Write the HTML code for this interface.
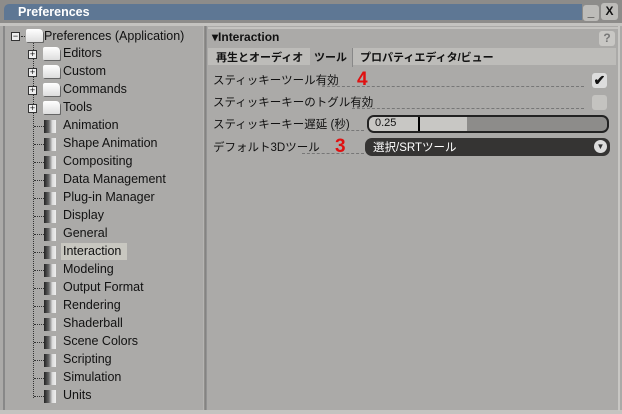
<!DOCTYPE html><html><head><meta charset="utf-8"><style>
*{margin:0;padding:0;box-sizing:border-box}
body{width:622px;height:414px;background:#abaaa8;position:relative;overflow:hidden;font-family:"Liberation Sans","Noto Sans CJK JP",sans-serif;font-size:12px;color:#111}
.a{position:absolute}
.tl{position:absolute;font-size:12.5px;white-space:nowrap}
.ic{position:absolute;width:12px;height:13px;background:linear-gradient(90deg,#222 0%,#666 40%,#ddd 70%,#eee 100%)}
.fd{position:absolute;width:17px;height:13px;background:linear-gradient(#fff,#ddd);border-radius:2px 4px 1px 1px;box-shadow:1px 1px 0 #666}
.pl{position:absolute;width:9px;height:9px;border:1px solid #333;background:#eee;font-size:9px;line-height:7px;text-align:center}
.dot{position:absolute;border-top:1px dotted #333;width:14px}
.jp{position:absolute;font-size:11.5px;white-space:nowrap}
.dl{position:absolute;border-top:1px dashed #777;height:0}
.tb{position:absolute;font-weight:bold;font-size:11px;white-space:nowrap;top:49px}
</style></head><body>
<div class="a" style="left:0;top:0;width:622px;height:23px;background:#8d8c8a"></div>
<div class="a" style="left:4px;top:4px;width:578px;height:16px;background:#5e7794;border-radius:5px 0 0 0"></div>
<div class="a" style="left:18px;top:4px;color:#fff;font-weight:bold;font-size:12.5px;line-height:16px">Preferences</div>
<div class="a" style="left:583px;top:5px;width:16px;height:16px;background:#bdbcb9;border-radius:3px;font-weight:bold;text-align:center;line-height:14px">_</div>
<div class="a" style="left:601px;top:3px;width:17px;height:17px;background:#bdbcb9;border-radius:3px;font-weight:bold;text-align:center;line-height:17px">X</div>
<div class="a" style="left:0;top:23px;width:622px;height:3px;background:#c4c3c0"></div>
<div class="a" style="left:3px;top:26px;width:2px;height:385px;background:#888"></div>
<div class="a" style="left:203px;top:26px;width:4px;height:385px;background:linear-gradient(90deg,#c8c7c4,#7d7c7a,#999)"></div>
<div class="a" style="left:0;top:410px;width:622px;height:4px;background:#c4c3c0"></div>
<div class="a" style="left:618px;top:26px;width:2px;height:385px;background:#c8c7c4"></div>

<!-- tree -->
<div class="pl" style="left:11px;top:32px">−</div>
<div class="dot" style="left:21px;top:36px;width:6px"></div>
<div class="fd" style="left:26px;top:29px"></div>
<div class="tl" style="left:44px;top:29px">Preferences (Application)</div>
<div class="a" style="left:33px;top:43px;height:355px;border-left:1px dotted #333"></div>
<div id="t"></div>
<script>
var items=["Editors","Custom","Commands","Tools","Animation","Shape Animation","Compositing","Data Management","Plug-in Manager","Display","General","Interaction","Modeling","Output Format","Rendering","Shaderball","Scene Colors","Scripting","Simulation","Units"];
var h="";
items.forEach(function(n,i){var y=54+i*18;
if(i<4){h+='<div class="pl" style="left:28px;top:'+(y-4)+'px">+</div><div class="fd" style="left:43px;top:'+(y-7)+'px"></div>';}
else{h+='<div class="dot" style="left:34px;top:'+y+'px;width:10px"></div><div class="ic" style="left:44px;top:'+(y-6)+'px"></div>';}
if(n=="Interaction")h+='<div class="a" style="left:61px;top:'+(y-9)+'px;width:66px;height:17px;background:#c8c7c0"></div>';
h+='<div class="tl" style="left:63px;top:'+(y-8)+'px">'+n+'</div>';});
document.getElementById("t").outerHTML=h;
</script>

<!-- right -->
<div class="a" style="left:208px;top:27px;width:410px;height:2px;background:#c4c3c0"></div>
<div class="a" style="left:212px;top:30px;font-weight:bold;font-size:12px">▾Interaction</div>
<div class="a" style="left:599px;top:31px;width:16px;height:15px;background:#c8c7c4;border-radius:3px;text-align:center;font-weight:bold;color:#777;line-height:15px">?</div>
<div class="a" style="left:208px;top:48px;width:408px;height:17px;background:#bdbcb9"></div>
<div class="a" style="left:310px;top:48px;width:43px;height:19px;background:#abaaa8;border-right:1px solid #888"></div>
<div class="tb" style="left:216px">再生とオーディオ</div>
<div class="tb" style="left:314px">ツール</div>
<div class="tb" style="left:360px">プロパティエディタ/ビュー</div>

<div class="jp" style="left:213px;top:72px">スティッキーツール有効</div>
<div class="dl" style="left:322px;top:86px;width:262px"></div>
<div class="a" style="left:357px;top:69px;color:#e01010;font-weight:bold;font-size:19px">4</div>
<div class="a" style="left:592px;top:73px;width:15px;height:15px;background:#ddd;border-radius:3px;font-size:14px;line-height:15px;text-align:center;font-weight:bold">✔</div>

<div class="jp" style="left:213px;top:94px">スティッキーキーのトグル有効</div>
<div class="dl" style="left:352px;top:108px;width:232px"></div>
<div class="a" style="left:592px;top:95px;width:15px;height:15px;background:#c4c3c0;border-radius:3px"></div>

<div class="jp" style="left:213px;top:116px">スティッキーキー遅延 (秒)</div>
<div class="dl" style="left:332px;top:130px;width:32px"></div>
<div class="a" style="left:367px;top:115px;width:242px;height:18px;background:#8d8c8a;border:2px solid #222;border-radius:7px;overflow:hidden">
<div class="a" style="left:0;top:0;width:98px;height:14px;background:#c8c7c4"></div>
<div class="a" style="left:49px;top:0;width:2px;height:14px;background:#000"></div>
<div class="a" style="left:6px;top:0;font-size:11px;line-height:13px">0.25</div></div>

<div class="jp" style="left:213px;top:139px">デフォルト3Dツール</div>
<div class="dl" style="left:302px;top:153px;width:62px"></div>
<div class="a" style="left:335px;top:136px;color:#e01010;font-weight:bold;font-size:19px">3</div>
<div class="a" style="left:365px;top:138px;width:245px;height:18px;background:#353433;border-radius:7px;color:#fff">
<div class="a" style="left:8px;top:1px;font-size:11.5px">選択/SRTツール</div>
<div class="a" style="left:229px;top:2px;width:13px;height:13px;background:#ddd;border-radius:50%;color:#333;font-size:8px;text-align:center;line-height:13px">▼</div></div>
</body></html>
